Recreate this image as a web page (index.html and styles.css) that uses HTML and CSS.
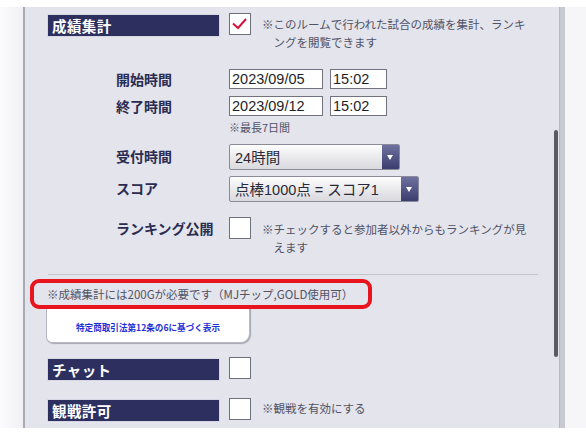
FILE: index.html
```html
<!DOCTYPE html>
<html lang="ja">
<head>
<meta charset="utf-8">
<link rel="stylesheet" href="styles.css">
</head>
<body>
<div class="frame">
  <div class="side-left"></div>
  <div class="panel">
    <div class="row head-row">
      <div class="bar">成績集計</div>
      <div class="cb checked">
        <svg width="20" height="20" viewBox="0 0 20 20"><path d="M3 9.5 L8 14 L16 5" fill="none" stroke="#d4143c" stroke-width="2"/></svg>
      </div>
      <div class="note">※このルームで行われた試合の成績を集計、ランキングを閲覧できます</div>
    </div>

    <div class="row field first-field">
      <div class="label">開始時間</div>
      <div class="ctrl"><div class="input date">2023/09/05</div><div class="input time">15:02</div></div>
    </div>
    <div class="row field second-field">
      <div class="label">終了時間</div>
      <div class="ctrl"><div class="input date">2023/09/12</div><div class="input time">15:02</div></div>
    </div>
    <div class="small-note">※最長7日間</div>

    <div class="row field sel-field1">
      <div class="label">受付時間</div>
      <div class="ctrl"><div class="select s1"><span>24時間</span><i class="arrow"></i></div></div>
    </div>
    <div class="row field sel-field2">
      <div class="label">スコア</div>
      <div class="ctrl"><div class="select s2"><span>点棒1000点 = スコア1</span><i class="arrow"></i></div></div>
    </div>

    <div class="row rank-row">
      <div class="label">ランキング公開</div>
      <div class="cb"></div>
      <div class="note">※チェックすると参加者以外からもランキングが見えます</div>
    </div>

    <div class="sep"></div>

    <div class="notice">※成績集計には200Gが必要です（MJチップ,GOLD使用可）</div>
    <div class="law-btn">特定商取引法第12条の6に基づく表示</div>

    <div class="row head-row chat-row">
      <div class="bar">チャット</div>
      <div class="cb"></div>
    </div>
    <div class="row head-row watch-row">
      <div class="bar">観戦許可</div>
      <div class="cb"></div>
      <div class="note single">※観戦を有効にする</div>
    </div>

    <div class="thumb"></div>
  </div>
  <div class="side-right"></div>
</div>
</body>
</html>
```

FILE: styles.css
```css
html, body {
  margin: 0;
  padding: 0;
  background: #ffffff;
}
body {
  font-family: "Noto Sans CJK JP", "Liberation Sans", sans-serif;
  width: 586px;
  height: 437px;
  overflow: hidden;
}
.frame {
  display: flex;
  padding-top: 7px;
  height: 421px;
}
.side-left {
  width: 23px;
  background: linear-gradient(to right, #fbfbfd, #f1f1f5);
}
.side-right {
  width: 21px;
  background: #f6f6f9;
}
.panel {
  position: relative;
  height: 421px;
  background: #e4e4ec;
  border-left: 2px solid #a9a9b6;
  border-right: 5px solid #c9c9d1;
  box-shadow: inset -1px 0 0 #b8b8c2;
  padding-left: 23px;
  box-sizing: border-box;
  width: 542px;
  overflow: hidden;
}
.row {
  display: flex;
  align-items: flex-start;
}
.bar {
  width: 171px;
  height: 21px;
  background: #2d2f5f;
  color: #ffffff;
  font-weight: bold;
  font-size: 14.5px;
  line-height: 21px;
  padding-left: 4px;
  box-sizing: border-box;
  margin-top: 2px;
  box-shadow: 0 0 0 1px #d6d6e4;
  letter-spacing: 0.4px;
}
.cb {
  width: 22px;
  height: 22px;
  box-sizing: border-box;
  background: #ffffff;
  border: 1px solid #70707e;
  margin-left: 10px;
  display: flex;
  align-items: center;
  justify-content: center;
}
.note {
  margin-left: 11px;
  width: 256px;
  font-size: 11.5px;
  line-height: 18.5px;
  color: #505366;
  padding-left: 1em;
  text-indent: -1em;
  margin-top: 1.75px;
}
.note.single {
  margin-top: 1.5px;
}
.head-row {
  margin-top: 6px;
}
.first-field {
  margin-top: 17px;
}
.second-field {
  margin-top: 7px;
}
.field .label,
.rank-row .label {
  width: 113px;
  margin-left: 68px;
  font-weight: bold;
  font-size: 14px;
  color: #2a2c52;
  line-height: 20px;
}
.field .ctrl {
  display: flex;
  gap: 7px;
  align-items: center;
}
.input {
  height: 20px;
  box-sizing: border-box;
  background: #ffffff;
  border: 1px solid #727280;
  font-family: "Liberation Sans", "Noto Sans CJK JP", sans-serif;
  font-size: 14.5px;
  line-height: 18px;
  padding-left: 2px;
  color: #1e1e28;
}
.input.date { width: 94px; }
.input.time { width: 57px; }
.small-note {
  margin-left: 181px;
  margin-top: 3px;
  font-size: 11px;
  line-height: 16px;
  color: #505366;
}
.sel-field1 { margin-top: 9px; }
.sel-field2 { margin-top: 6px; }
.sel-field1 .label, .sel-field2 .label {
  line-height: 24px;
}
.select {
  height: 26px;
  box-sizing: border-box;
  border: 1px solid #8a8a98;
  border-radius: 2px;
  background: linear-gradient(#fdfdfd, #d9d9de);
  display: flex;
  align-items: center;
  justify-content: space-between;
  font-family: "Liberation Sans", "Noto Sans CJK JP", sans-serif;
  font-size: 14.5px;
  color: #2a2a36;
  padding-left: 5px;
  overflow: hidden;
  white-space: pre;
}
.select.s1 { width: 171px; }
.select.s2 { width: 190px; }
.arrow {
  width: 17px;
  height: 24px;
  background: linear-gradient(#6e70a0, #3b3d6e);
  position: relative;
  display: block;
}
.arrow::after {
  content: "";
  position: absolute;
  left: 5px;
  top: 10px;
  border-left: 3.5px solid transparent;
  border-right: 3.5px solid transparent;
  border-top: 5px solid #ffffff;
}
.rank-row {
  margin-top: 15px;
}
.rank-row .label {
  line-height: 22px;
  margin-right: -10px;
}
.rank-row .note {
  margin-top: 2.75px;
}
.sep {
  margin-top: 17px;
  width: 490px;
  height: 1px;
  background: #c4c4cd;
}
.notice {
  margin-top: 4px;
  margin-left: -18px;
  width: 342px;
  height: 30px;
  box-sizing: border-box;
  border: 4px solid #e8141e;
  border-radius: 9px;
  font-size: 11.5px;
  line-height: 22px;
  color: #505366;
  padding-left: 13px;
  white-space: nowrap;
  position: relative;
  z-index: 1;
}
.law-btn {
  margin-left: -2px;
  margin-top: -2px;
  width: 204px;
  height: 36px;
  box-sizing: border-box;
  background: #ffffff;
  border: 1px solid #b6b6c4;
  border-top: none;
  border-radius: 0 0 9px 6px;
  box-shadow: 1px 1px 1px #a8a8b6;
  color: #1f2fd6;
  font-weight: bold;
  font-size: 8.6px;
  text-align: center;
  line-height: 36px;
  padding-top: 2px;
}
.chat-row {
  margin-top: 14px;
}
.watch-row {
  margin-top: 18px;
}
.thumb {
  position: absolute;
  left: 529px;
  top: 123px;
  width: 4px;
  height: 227px;
  border-radius: 2px;
  background: #5a5a62;
}
```
